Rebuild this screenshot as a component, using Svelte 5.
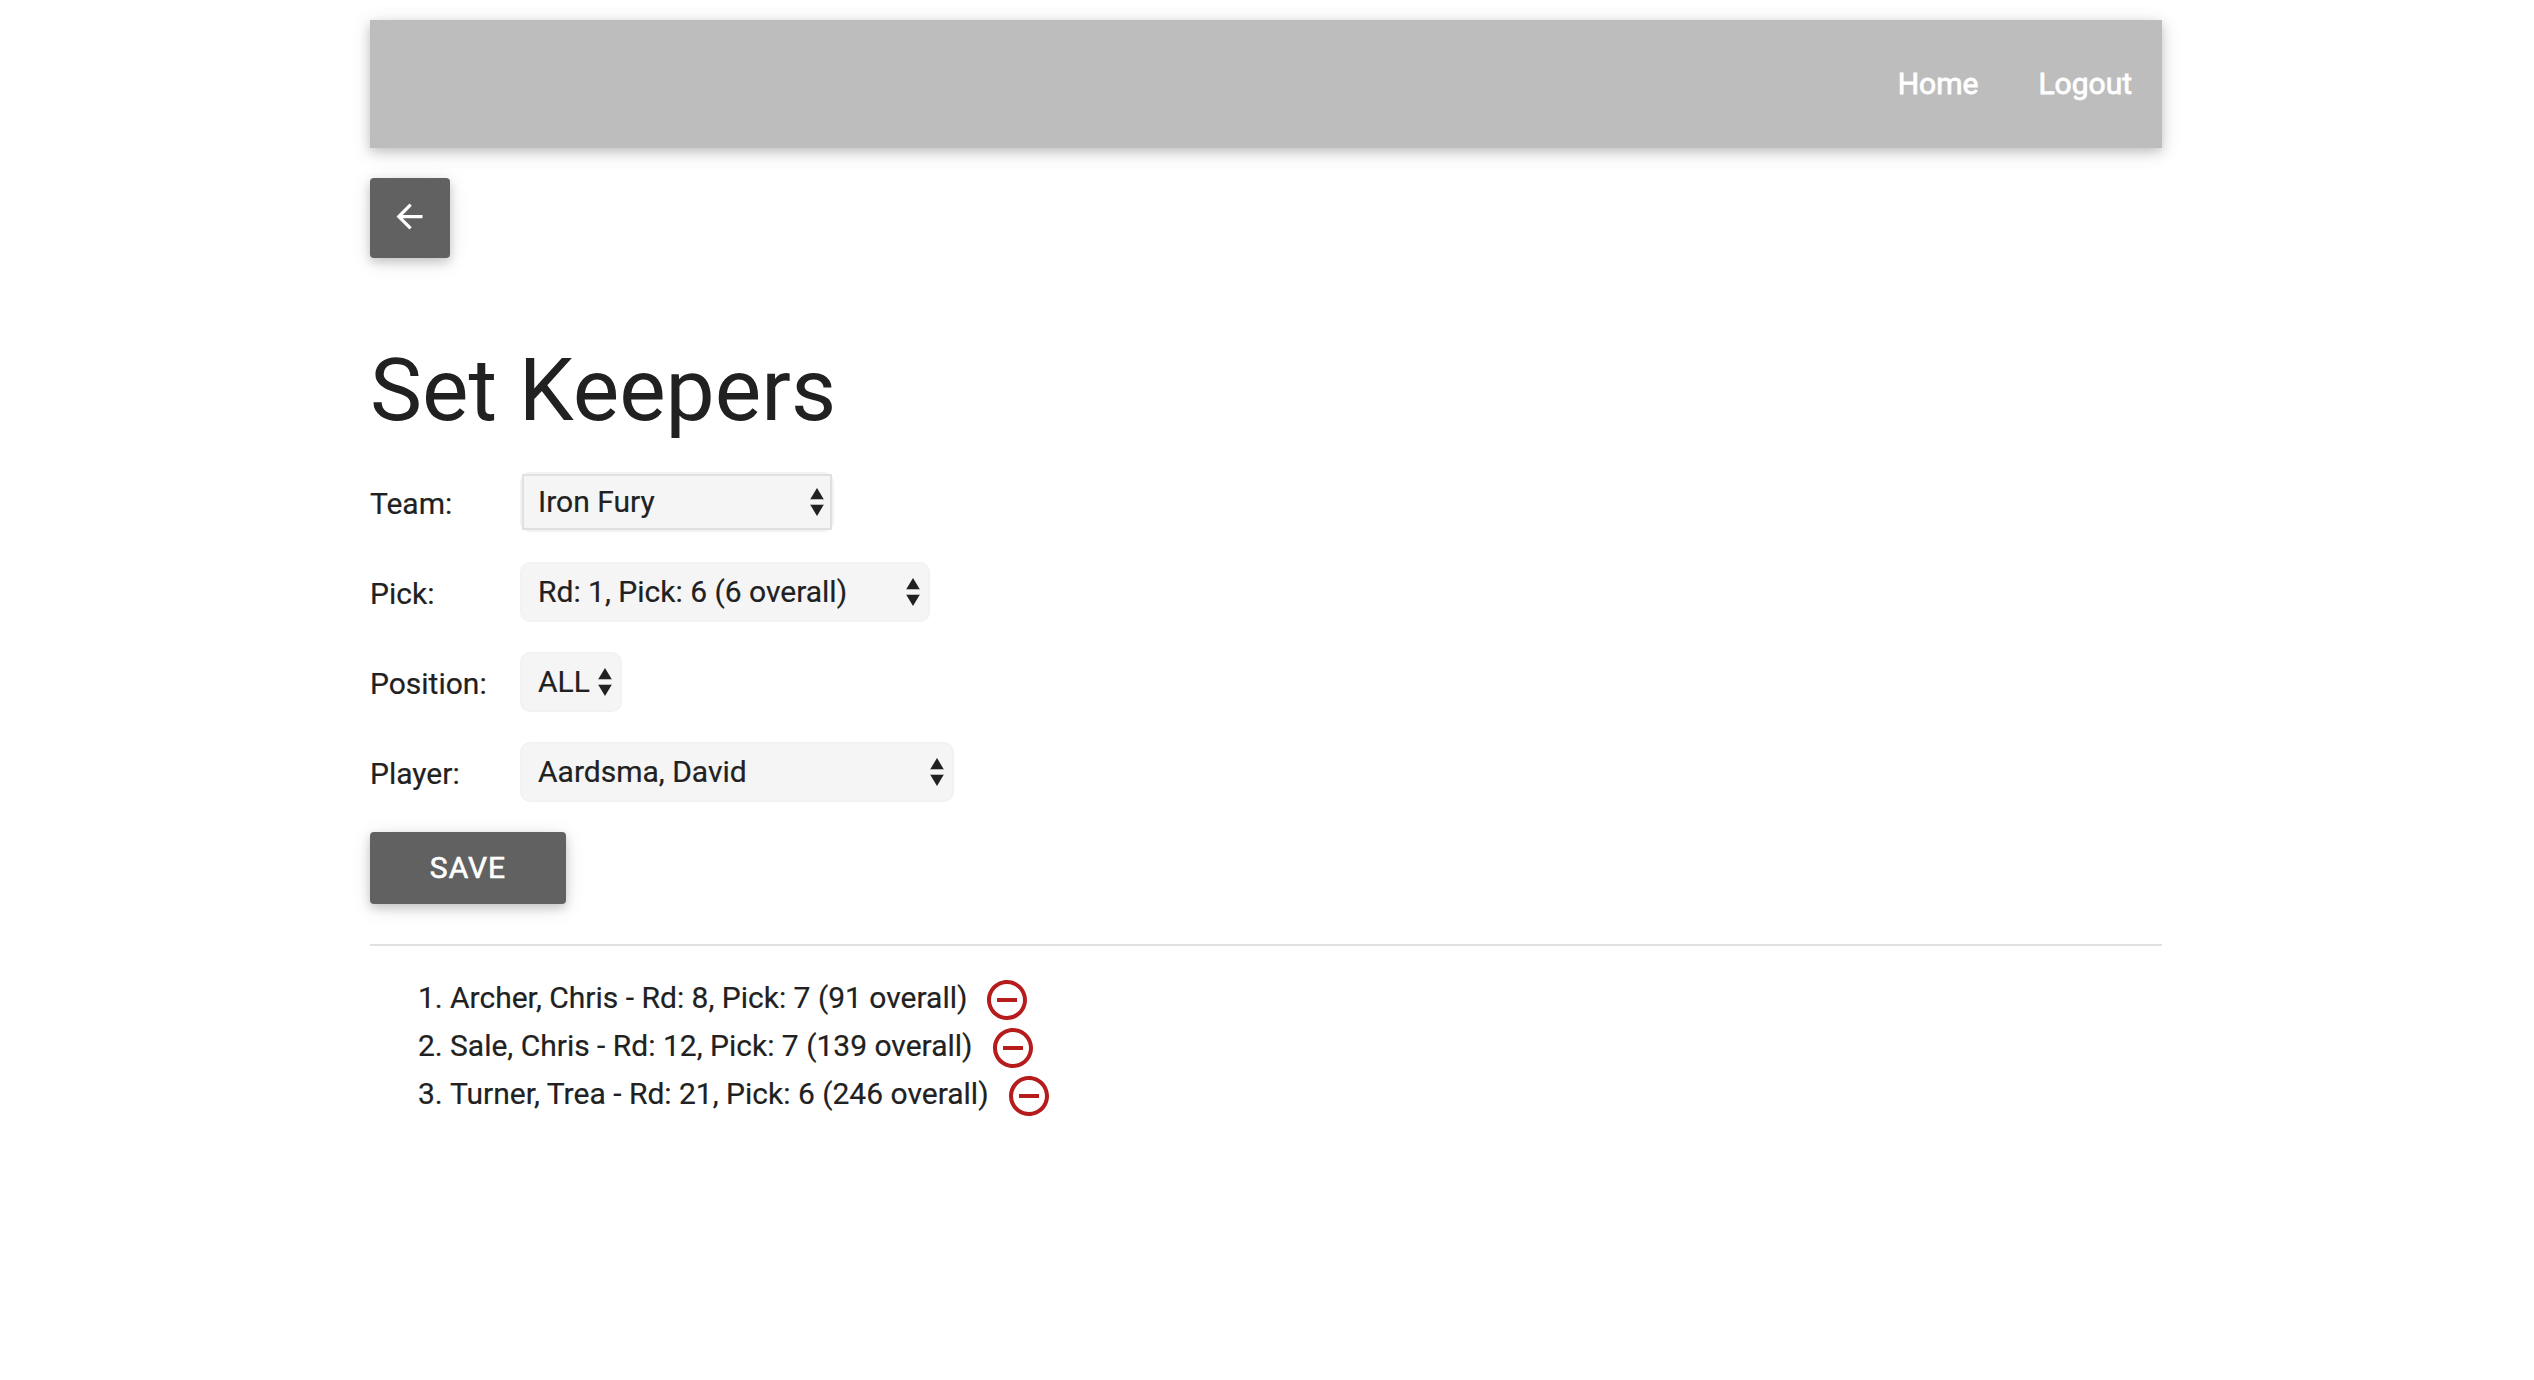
<script>
  const fields = [
    { id: 'team', label: 'Team:', value: 'Iron Fury', size: 'w-team', focused: true },
    { id: 'pick', label: 'Pick:', value: 'Rd: 1, Pick: 6 (6 overall)', size: 'w-pick' },
    { id: 'position', label: 'Position:', value: 'ALL', size: 'w-position' },
    { id: 'player', label: 'Player:', value: 'Aardsma, David', size: 'w-player' }
  ];

  const keepers = [
    'Archer, Chris - Rd: 8, Pick: 7 (91 overall)',
    'Sale, Chris - Rd: 12, Pick: 7 (139 overall)',
    'Turner, Trea - Rd: 21, Pick: 6 (246 overall)'
  ];
</script>

<div class="container">
  <nav>
    <a href="#home">Home</a>
    <a href="#logout">Logout</a>
  </nav>

  <button class="btn back" aria-label="Back">
    <svg viewBox="0 0 24 24"><path d="M20 11H7.83l5.59-5.59L12 4l-8 8 8 8 1.41-1.41L7.83 13H20v-2z" /></svg>
  </button>

  <h1>Set Keepers</h1>

  <form>
    {#each fields as f}
      <div class="row">
        <label for={f.id}>{f.label}</label>
        <div class="select {f.size}" class:focused={f.focused}>
          <select id={f.id}><option>{f.value}</option></select>
          <svg viewBox="0 0 14 28">
            <path class="edge" d="M0 11h14v1H0zM0 16h14v1H0z" />
            <path d="M7 0l6.6 11H.4zM7 28L.4 17h13.2z" />
          </svg>
        </div>
      </div>
    {/each}
    <button type="button" class="btn save">SAVE</button>
  </form>

  <hr />

  <ol>
    {#each keepers as keeper, i}
      <li>
        <span class="num">{i + 1}.</span>
        <span>{keeper}</span>
        <svg viewBox="0 0 24 24"><path d="M7 11v2h10v-2H7zm5-9C6.48 2 2 6.48 2 12s4.480 10 10 10 10-4.480 10-10S17.520 2 12 2zm0 18c-4.410 0-8-3.590-8-8s3.590-8 8-8 8 3.590 8 8-3.590 8-8 8z" /></svg>
      </li>
    {/each}
  </ol>
</div>

<style>
  :global(body) {
    background: #fff;
    color: #212121;
    font: 30px/45px Roboto, sans-serif;
    padding-right: 2px;
  }
  .container {
    width: 1792px;
    margin: 0 auto;
    padding-top: 20px;
  }
  nav {
    box-sizing: border-box;
    height: 128px;
    padding-bottom: 2px;
    background: #bdbdbd;
    box-shadow: 0 4px 10px 0 rgba(0, 0, 0, 0.16), 0 4px 20px 0 rgba(0, 0, 0, 0.12);
    display: flex;
    justify-content: flex-end;
    align-items: center;
  }
  nav a {
    color: #fff;
    text-decoration: none;
    padding: 0 30px;
    -webkit-text-stroke: 0.8px #fff;
  }
  .btn {
    box-sizing: border-box;
    border: 0;
    border-radius: 4px;
    background: #616161;
    color: #fff;
    display: flex;
    align-items: center;
    justify-content: center;
    padding: 0;
    font: inherit;
    box-shadow: 0 4px 10px 0 rgba(0, 0, 0, 0.16), 0 4px 20px 0 rgba(0, 0, 0, 0.12);
  }
  .back {
    width: 80px;
    height: 80px;
    margin-top: 30px;
  }
  .back svg {
    width: 39px;
    height: 39px;
    fill: #fff;
    margin: 0 1px 3px 0;
  }
  h1 {
    margin: 82px 0 0;
    height: 132px;
    font-size: 87.6px;
    line-height: 100px;
    font-weight: 400;
  }
  .row {
    display: flex;
    height: 60px;
    margin-bottom: 30px;
  }
  .row label {
    width: 150px;
    line-height: 63px;
    -webkit-text-stroke: 0.2px #212121;
  }
  .select {
    box-sizing: border-box;
    height: 60px;
    background: #f5f5f5;
    border: 2px solid #f2f2f2;
    border-radius: 10px;
    display: grid;
    align-items: center;
  }
  .select select,
  .select svg {
    grid-area: 1 / 1;
  }
  .select select {
    appearance: none;
    box-sizing: border-box;
    width: 100%;
    height: 56px;
    border: 0;
    margin: 0;
    padding: 0 0 2px 16px;
    background: transparent;
    color: #212121;
    font: inherit;
    outline: 0;
    -webkit-text-stroke: 0.2px #212121;
  }
  .focused select {
    box-shadow: inset 0 0 0 2px #e0e0e0;
  }
  .select svg {
    width: 14px;
    height: 28px;
    justify-self: end;
    margin-right: 8px;
    fill: #212121;
    pointer-events: none;
  }
  .select svg .edge {
    fill: #bbb;
  }
  .w-team { width: 314px; }
  .w-pick { width: 410px; }
  .w-position { width: 102px; }
  .w-player { width: 434px; }
  .save {
    width: 196px;
    height: 72px;
    padding-bottom: 2px;
    letter-spacing: 1px;
    -webkit-text-stroke: 0.6px #fff;
  }
  hr {
    border: 0;
    height: 2px;
    background: #e0e0e0;
    margin: 40px 0 30px;
  }
  ol {
    list-style: none;
    margin: 0;
    padding: 0 0 0 48px;
    -webkit-text-stroke: 0.2px #212121;
  }
  li {
    display: flex;
    height: 48px;
    line-height: 43px;
  }
  .num {
    width: 32px;
  }
  li svg {
    width: 48px;
    height: 48px;
    margin-left: 16px;
    fill: #b71c1c;
  }
  li svg path {
    stroke: none;
  }
</style>
